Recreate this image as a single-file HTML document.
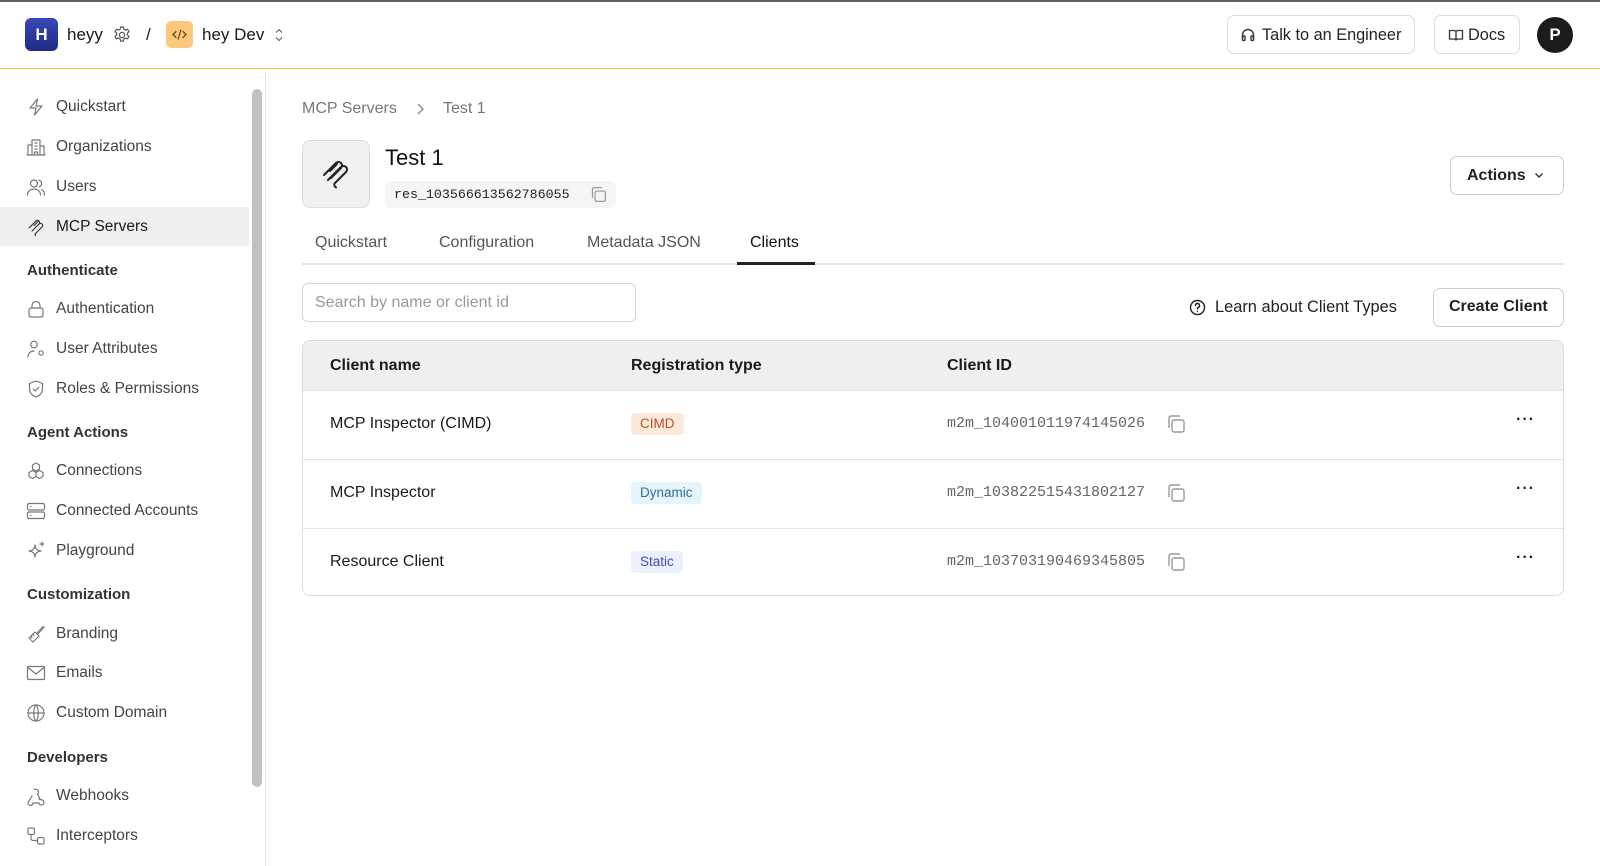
<!DOCTYPE html>
<html><head><meta charset="utf-8">
<style>
*{box-sizing:border-box;margin:0;padding:0}
body{width:1600px;height:866px;overflow:hidden;background:#fff;font-family:"Liberation Sans",sans-serif;color:#1a1a1a;position:relative}
.a{position:absolute}
.t{position:absolute;line-height:20px;height:20px;white-space:nowrap}
svg{display:block}
.ic{position:absolute;width:20px;height:20px;fill:none;stroke:#777;stroke-width:1.2;stroke-linecap:round;stroke-linejoin:round}
.nav{font-size:15.5px;color:#444;left:56px}
.sec{font-size:15px;font-weight:bold;color:#333;left:27px}
.btn{position:absolute;border:1px solid #ddd;border-radius:7px;background:#fff}
.mono{font-family:"Liberation Mono",monospace}
.row{position:absolute;left:0;right:0;height:69px;border-top:1px solid #e3e3e3}
.badge{position:absolute;top:22px;height:22px;line-height:22px;padding:0 9px;border-radius:4px;font-size:13.5px}
.cp{position:absolute;width:22px;height:22px;fill:none;stroke:#999;stroke-width:1.4}
.dots{position:absolute;left:1213px;top:20px;font-size:16px;font-weight:bold;letter-spacing:1px;color:#222}
</style></head><body>
<div class="a" style="left:0;top:0;width:1600px;height:2px;background:#5c5e66"></div>
<div class="a" style="left:0;top:68px;width:1600px;height:1px;background:#f0c431"></div>

<!-- header -->
<div class="a" style="left:25px;top:18px;width:33px;height:33px;border-radius:6px;background:linear-gradient(#3a47b8,#1f2a86);color:#fff;font-weight:bold;font-size:17px;text-align:center;line-height:33px">H</div>
<div class="t" style="left:67px;top:25px;font-size:17px">heyy</div>
<svg class="ic" style="left:112px;top:25px;stroke:#555" viewBox="0 0 20 20"><circle cx="10" cy="10" r="2.6"/><path d="M8.6 2h2.8l.5 2.2 1.6.9 2.1-.8 1.4 2.4-1.7 1.5v1.7l1.7 1.5-1.4 2.4-2.1-.8-1.6.9-.5 2.2H8.6l-.5-2.2-1.6-.9-2.1.8-1.4-2.4 1.7-1.5V8.2L3 6.7l1.4-2.4 2.1.8 1.6-.9z"/></svg>
<div class="t" style="left:146px;top:25px;font-size:17px">/</div>
<div class="a" style="left:166px;top:21px;width:27px;height:27px;border-radius:5px;background:#fcc97c"></div>
<svg class="a" style="left:171px;top:26px;width:17px;height:17px;fill:none;stroke:#6b4a10;stroke-width:1.3;stroke-linecap:round" viewBox="0 0 17 17"><path d="M5 5.5 2 8.5l3 3M12 5.5l3 3-3 3M9.8 4 7.2 13"/></svg>
<div class="t" style="left:202px;top:25px;font-size:17px">hey Dev</div>
<svg class="a" style="left:273px;top:26px;width:12px;height:18px;fill:none;stroke:#777;stroke-width:1.3" viewBox="0 0 12 18"><path d="M3 6.5 6 3.5l3 3M3 11.5l3 3 3-3"/></svg>

<div class="btn" style="left:1227px;top:15px;width:188px;height:39px"></div>
<svg class="a" style="left:1240px;top:27px;width:16px;height:16px;fill:none;stroke:#333;stroke-width:1.4" viewBox="0 0 16 16"><path d="M2.5 12V8a5.5 5.5 0 0 1 11 0v4"/><rect x="2.5" y="9" width="2.5" height="4.5" rx="1"/><rect x="11" y="9" width="2.5" height="4.5" rx="1"/></svg>
<div class="t" style="left:1262px;top:25px;font-size:16.3px;color:#222">Talk to an Engineer</div>
<div class="btn" style="left:1434px;top:15px;width:86px;height:39px"></div>
<svg class="a" style="left:1448px;top:28px;width:16px;height:14px;fill:none;stroke:#333;stroke-width:1.3" viewBox="0 0 16 14"><path d="M1.5 2.5h4.5c1.2 0 2 .8 2 2v8c0-.8-.8-1.5-2-1.5H1.5zM14.5 2.5H10c-1.2 0-2 .8-2 2v8c0-.8.8-1.5 2-1.5h4.5z"/></svg>
<div class="t" style="left:1468px;top:25px;font-size:16.3px;color:#222">Docs</div>
<div class="a" style="left:1537px;top:17px;width:36px;height:36px;border-radius:50%;background:#1c1c1c;color:#fff;font-weight:bold;font-size:17px;text-align:center;line-height:36px">P</div>

<!-- sidebar -->
<div class="a" style="left:265px;top:69px;width:1px;height:797px;background:#e8e8e8"></div>
<div class="a" style="left:252px;top:89px;width:10px;height:698px;border-radius:5px;background:#c1c1c1"></div>
<div class="a" style="left:0;top:207px;width:249px;height:39px;background:#efefef"></div>

<svg class="ic" style="left:26px;top:97px" viewBox="0 0 20 20"><path d="M11.5 2 4 11h6l-1.5 7L16 9h-6z"/></svg>
<div class="t nav" style="top:97px">Quickstart</div>
<svg class="ic" style="left:26px;top:137px" viewBox="0 0 20 20"><path d="M6 18V3h8v15M2 18V8h4M14 9h4v9M1 18h18M9 6h2M9 9h2M9 12h2M8.5 18v-3h3v3"/></svg>
<div class="t nav" style="top:137px">Organizations</div>
<svg class="ic" style="left:26px;top:177px" viewBox="0 0 20 20"><circle cx="8" cy="6.5" r="3.5"/><path d="M1.5 18c0-3.6 2.9-6 6.5-6s6.5 2.4 6.5 6M13 3.2a3.4 3.4 0 0 1 0 6.6M15.5 12.5c1.8.8 3 2.8 3 5.5"/></svg>
<div class="t nav" style="top:177px">Users</div>
<svg class="ic" style="left:26px;top:217px;stroke:#333" viewBox="0 0 20 20"><path d="M3 11l7-7a2 2 0 0 1 3 3l-6 6M6 14l7-7a2 2 0 0 1 3 3l-6.5 6.5a1.5 1.5 0 0 0 0 2M8 8.5l4-4"/></svg>
<div class="t nav" style="top:217px;color:#1a1a1a">MCP Servers</div>

<div class="t sec" style="top:261px">Authenticate</div>
<svg class="ic" style="left:26px;top:299px" viewBox="0 0 20 20"><rect x="3" y="9" width="14" height="9" rx="2"/><path d="M6 9V6.5a4 4 0 0 1 8 0V9"/></svg>
<div class="t nav" style="top:299px">Authentication</div>
<svg class="ic" style="left:26px;top:339px" viewBox="0 0 20 20"><circle cx="8" cy="5.5" r="3.3"/><path d="M2 18c0-3.5 2.5-6 6-6"/><circle cx="15" cy="14" r="2.2"/></svg>
<div class="t nav" style="top:339px">User Attributes</div>
<svg class="ic" style="left:26px;top:379px" viewBox="0 0 20 20"><path d="M10 2 3.5 4.5V10c0 4 3 6.5 6.5 8 3.5-1.5 6.5-4 6.5-8V4.5z"/><path d="m7.3 10 2 2 3.5-3.7"/></svg>
<div class="t nav" style="top:379px">Roles &amp; Permissions</div>

<div class="t sec" style="top:423px">Agent Actions</div>
<svg class="ic" style="left:26px;top:461px" viewBox="0 0 20 20"><path d="M10 2l3.5 2v4L10 10 6.5 8V4zM6.5 9.5l3.5 2v4l-3.5 2L3 15.5v-4zM13.5 9.5l3.5 2v4l-3.5 2-3.5-2v-4z"/></svg>
<div class="t nav" style="top:461px">Connections</div>
<svg class="ic" style="left:26px;top:501px" viewBox="0 0 20 20"><rect x="1.5" y="2.5" width="17" height="6.5" rx="1.5"/><rect x="1.5" y="11" width="17" height="6.5" rx="1.5"/><path d="M4.5 5.7h.5M4.5 14.2h.5"/></svg>
<div class="t nav" style="top:501px">Connected Accounts</div>
<svg class="ic" style="left:26px;top:541px" viewBox="0 0 20 20"><path d="M9 4c.5 4 2 5.5 6 6-4 .5-5.5 2-6 6-.5-4-2-5.5-6-6 4-.5 5.5-2 6-6zM16 1v4M14 3h4"/></svg>
<div class="t nav" style="top:541px">Playground</div>

<div class="t sec" style="top:585px">Customization</div>
<svg class="ic" style="left:26px;top:624px" viewBox="0 0 20 20"><path d="M11 9l6-6.5 1 1L12 10M3 14l6-6 4 4-6 6zM5 12l1 2M7 10l1 2"/></svg>
<div class="t nav" style="top:624px">Branding</div>
<svg class="ic" style="left:26px;top:663px" viewBox="0 0 20 20"><rect x="1.5" y="3.5" width="17" height="13" rx="1"/><path d="m2 4.5 8 6.5 8-6.5"/></svg>
<div class="t nav" style="top:663px">Emails</div>
<svg class="ic" style="left:26px;top:703px" viewBox="0 0 20 20"><circle cx="10" cy="10" r="8"/><path d="M2 10h16M10 2c-3 3-3 13 0 16M10 2c3 3 3 13 0 16"/></svg>
<div class="t nav" style="top:703px">Custom Domain</div>

<div class="t sec" style="top:748px">Developers</div>
<svg class="ic" style="left:26px;top:786px" viewBox="0 0 20 20"><path d="M8 3.5a3 3 0 0 1 4.5 2.5c0 1-.5 1.5-1 2L14 13M6 10l-3 5a2.5 2.5 0 1 0 4 2h6a2.5 2.5 0 1 0 3-3l-3-1"/></svg>
<div class="t nav" style="top:786px">Webhooks</div>
<svg class="ic" style="left:26px;top:826px" viewBox="0 0 20 20"><rect x="2" y="2" width="6.5" height="6.5" rx="1.5"/><rect x="11.5" y="11.5" width="6.5" height="6.5" rx="1.5"/><path d="M5 8.5v3.5c0 1.5 1 2.5 2.5 2.5h4"/></svg>
<div class="t nav" style="top:826px">Interceptors</div>

<!-- main -->
<div class="t" style="left:302px;top:99px;font-size:16px;color:#777">MCP Servers</div>
<svg class="a" style="left:415px;top:102px;width:10px;height:14px;fill:none;stroke:#888;stroke-width:1.3" viewBox="0 0 10 14"><path d="M3 2l5 5-5 5"/></svg>
<div class="t" style="left:443px;top:99px;font-size:16px;color:#777">Test 1</div>

<div class="a" style="left:302px;top:140px;width:68px;height:68px;border:1px solid #ddd;border-radius:8px;background:#f0f0f0"></div>
<svg class="a" style="left:318px;top:156px;width:36px;height:36px;fill:none;stroke:#222;stroke-width:2;stroke-linecap:round;stroke-linejoin:round" viewBox="0 0 36 36"><path d="M6 19l12-12a3.5 3.5 0 0 1 5 5L13 22M10 24l13-13a3.5 3.5 0 0 1 5 5L17 27a2.5 2.5 0 0 0 0 3.5l1 1M12 15l7-7"/></svg>
<div class="t" style="left:385px;top:144px;font-size:22px;height:28px;line-height:28px;color:#111">Test 1</div>
<div class="a" style="left:385px;top:181px;width:231px;height:27px;border-radius:5px;background:#f5f5f5"></div>
<div class="t mono" style="left:394px;top:185px;font-size:13.3px;color:#222">res_103566613562786055</div>
<svg class="cp" style="left:589px;top:185px;width:19px;height:19px" viewBox="0 0 22 22"><rect x="7" y="7" width="12" height="12" rx="2"/><path d="M4 15V5a2 2 0 0 1 2-2h9"/></svg>

<div class="btn" style="left:1450px;top:156px;width:114px;height:39px;border-color:#ccc"></div>
<div class="t" style="left:1467px;top:166px;font-size:16px;font-weight:bold;color:#222">Actions</div>
<svg class="a" style="left:1534px;top:171px;width:10px;height:8px;fill:none;stroke:#333;stroke-width:1.4" viewBox="0 0 10 8"><path d="M1.5 2.5 5 6l3.5-3.5"/></svg>

<div class="t" style="left:315px;top:233px;font-size:16px;color:#555">Quickstart</div>
<div class="t" style="left:439px;top:233px;font-size:16px;color:#555">Configuration</div>
<div class="t" style="left:587px;top:233px;font-size:16px;color:#555">Metadata JSON</div>
<div class="t" style="left:750px;top:233px;font-size:16px;color:#111">Clients</div>
<div class="a" style="left:302px;top:263px;width:1262px;height:2px;background:#e4e4e4"></div>
<div class="a" style="left:737px;top:262px;width:78px;height:3px;background:#222"></div>

<div class="a" style="left:302px;top:283px;width:334px;height:39px;border:1px solid #d6d6d6;border-radius:6px"></div>
<div class="t" style="left:315px;top:293px;font-size:16px;color:#999">Search by name or client id</div>

<svg class="a" style="left:1189px;top:299px;width:17px;height:17px;fill:none;stroke:#222;stroke-width:1.4;stroke-linecap:round" viewBox="0 0 17 17"><circle cx="8.5" cy="8.5" r="7"/><path d="M6.5 6.5a2 2 0 1 1 2.6 1.9c-.4.2-.6.5-.6 1v.6M8.5 12.3v.1"/></svg>
<div class="t" style="left:1215px;top:297px;font-size:16.4px;color:#222">Learn about Client Types</div>
<div class="btn" style="left:1433px;top:288px;width:131px;height:39px;border-color:#ccc"></div>
<div class="t" style="left:1449px;top:297px;font-size:16px;font-weight:bold;color:#222">Create Client</div>

<div class="a" style="left:302px;top:340px;width:1262px;height:256px;border:1px solid #dcdcdc;border-radius:8px;overflow:hidden">
  <div class="a" style="left:0;top:0;right:0;height:49px;background:#efefef"></div>
  <div class="t" style="left:27px;top:15px;font-size:16px;font-weight:bold">Client name</div>
  <div class="t" style="left:328px;top:15px;font-size:16px;font-weight:bold">Registration type</div>
  <div class="t" style="left:644px;top:15px;font-size:16px;font-weight:bold">Client ID</div>

  <div class="row" style="top:49px">
    <div class="t" style="left:27px;top:23px;font-size:16px">MCP Inspector (CIMD)</div>
    <div class="badge" style="left:328px;background:#fde9dc;color:#b4532a">CIMD</div>
    <div class="t mono" style="left:644px;top:23px;font-size:15px;color:#666">m2m_104001011974145026</div>
    <svg class="cp" style="left:862px;top:22px" viewBox="0 0 22 22"><rect x="7" y="7" width="12" height="12" rx="2"/><path d="M4 15V5a2 2 0 0 1 2-2h9"/></svg>
    <div class="dots">···</div>
  </div>
  <div class="row" style="top:118px">
    <div class="t" style="left:27px;top:23px;font-size:16px">MCP Inspector</div>
    <div class="badge" style="left:328px;background:#e6f5fb;color:#2f6f95">Dynamic</div>
    <div class="t mono" style="left:644px;top:23px;font-size:15px;color:#666">m2m_103822515431802127</div>
    <svg class="cp" style="left:862px;top:22px" viewBox="0 0 22 22"><rect x="7" y="7" width="12" height="12" rx="2"/><path d="M4 15V5a2 2 0 0 1 2-2h9"/></svg>
    <div class="dots">···</div>
  </div>
  <div class="row" style="top:187px">
    <div class="t" style="left:27px;top:23px;font-size:16px">Resource Client</div>
    <div class="badge" style="left:328px;background:#ecf0fd;color:#3b4fb8">Static</div>
    <div class="t mono" style="left:644px;top:23px;font-size:15px;color:#666">m2m_103703190469345805</div>
    <svg class="cp" style="left:862px;top:22px" viewBox="0 0 22 22"><rect x="7" y="7" width="12" height="12" rx="2"/><path d="M4 15V5a2 2 0 0 1 2-2h9"/></svg>
    <div class="dots">···</div>
  </div>
</div>
</body></html>
